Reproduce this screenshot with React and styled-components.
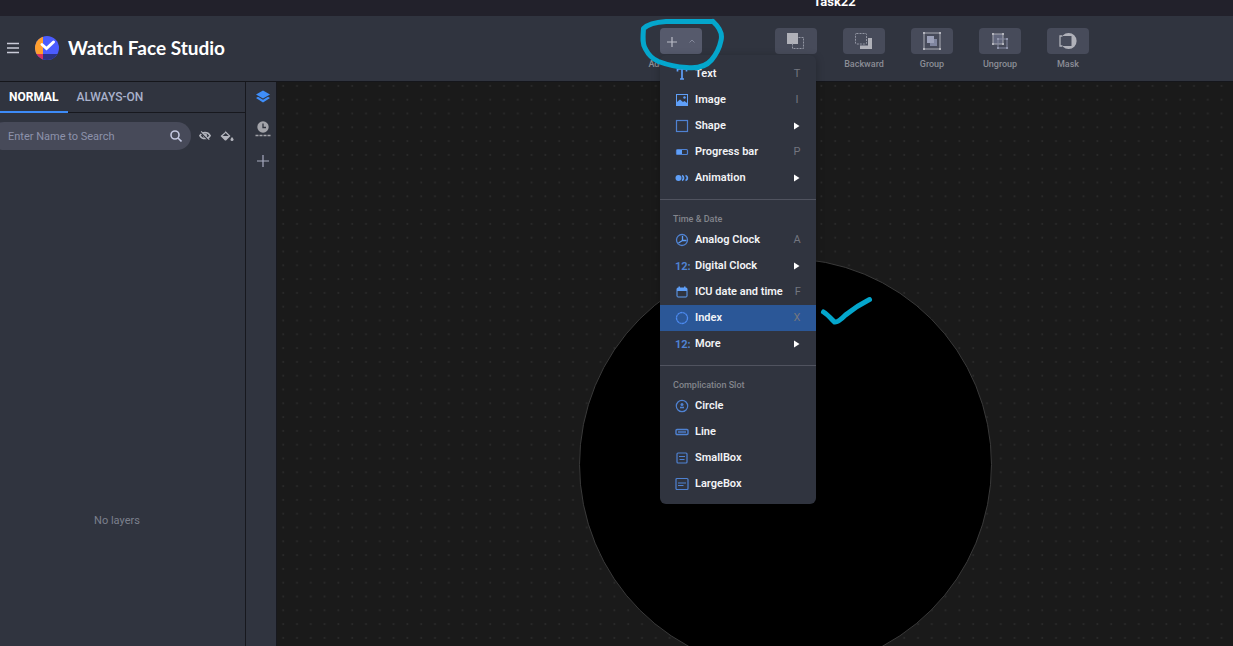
import React from "react";
import styled, { createGlobalStyle, css } from "styled-components";

const Global = createGlobalStyle`
  *, *::before, *::after { box-sizing: border-box; }
  body { margin: 0; background: #1a1a1a; font-family: Roboto, "Liberation Sans", sans-serif; }
  button, input { font: inherit; color: inherit; }
  button { border: 0; padding: 0; background: none; cursor: pointer; }
  svg { display: block; }
`;

const Page = styled.div`
  display: flex;
  flex-direction: column;
  height: 100vh;
  overflow: hidden;
`;

const TitleBar = styled.div`
  display: flex;
  flex: none;
  align-items: flex-end;
  justify-content: center;
  height: 16px;
  padding: 0 0 6px 436px;
  overflow: hidden;
  background: #22212b;
  color: #fff;
  font-size: 13px;
  font-weight: 700;
  line-height: 16px;
`;

const Header = styled.header`
  position: relative;
  z-index: 2;
  display: flex;
  flex: none;
  justify-content: space-between;
  height: 66px;
  padding: 0 131px 0 6px;
  background: #30343f;
  border-bottom: 1px solid #15161b;
`;

const Brand = styled.div`
  display: flex;
  align-items: center;
  padding-bottom: 2px;
`;

const MenuButton = styled.button`
  margin-right: 15px;
`;

const BrandName = styled.h1`
  margin: 0 0 0 9px;
  color: #fff;
  font-family: Lato, sans-serif;
  font-size: 19px;
  font-weight: 700;
  line-height: 24px;
`;

const Tools = styled.div`
  display: flex;
  padding-top: 12px;
`;

const Tool = styled.div`
  position: relative;
  z-index: ${(p) => (p.$spaced ? 1 : 0)};
  display: flex;
  flex-direction: column;
  align-items: center;
  gap: 4px;
  width: 68px;
  margin-right: ${(p) => (p.$spaced ? "47px" : "0")};
  color: #8b8d96;
  font-size: 9px;
  font-weight: 500;
  line-height: 12px;
  white-space: nowrap;
`;

const ToolButton = styled.button`
  display: flex;
  align-items: center;
  justify-content: center;
  gap: 10px;
  width: 42px;
  height: 26px;
  border-radius: 4px;
  background: ${(p) => (p.$open ? "#565a6c" : "#474b5a")};
  color: #a9abb3;
`;

const Menu = styled.div`
  position: absolute;
  top: 27px;
  left: 13px;
  width: 156px;
  padding: 6px 0 7px;
  border-radius: 6px;
  background: #30343f;
  box-shadow: 0 2px 8px rgba(0, 0, 0, 0.25);
`;

const MenuHeading = styled.div`
  margin-top: 8px;
  padding: 13px 13px 2px;
  border-top: 1px solid #50535f;
  color: #83858c;
  font-size: 9px;
  line-height: 12px;
`;

const MenuItem = styled.button`
  position: relative;
  display: grid;
  grid-template-columns: 16px 1fr 20px;
  column-gap: 5px;
  align-items: center;
  width: 100%;
  height: 26px;
  padding: 0 9px 0 14px;
  background: ${(p) => (p.$active ? "#2b5797" : "transparent")};
  color: #f2f3f6;
  font-size: 11px;
  font-weight: 600;
  line-height: 16px;
  text-align: left;
`;

const Hint = styled.span`
  display: flex;
  justify-content: center;
  color: #73767f;
  font-size: 11px;
  font-weight: 400;
`;

const overlay = css`
  position: absolute;
  pointer-events: none;
  fill: none;
  stroke: #04a6cc;
  stroke-width: 5;
  stroke-linecap: round;
  stroke-linejoin: round;
`;

const Scribble = styled.svg`
  ${overlay}
  top: -12px;
  left: -11px;
`;

const Tick = styled.svg`
  ${overlay}
  top: -10px;
  left: 158px;
`;

const Main = styled.main`
  display: flex;
  flex: 1;
  min-height: 0;
`;

const Layers = styled.section`
  flex: none;
  width: 246px;
  background: #30343f;
  border-right: 1px solid #17181e;
`;

const Tabs = styled.div`
  display: flex;
  height: 31px;
  border-bottom: 1px solid #17181e;
`;

const Tab = styled.button`
  height: 31px;
  padding: 0 9px;
  border-bottom: 2px solid ${(p) => (p.$active ? "#3d8bf7" : "transparent")};
  color: ${(p) => (p.$active ? "#fff" : "#a9b1cb")};
  font-size: 12px;
  font-weight: ${(p) => (p.$active ? 700 : 500)};
`;

const Filter = styled.div`
  display: flex;
  align-items: center;
  gap: 8px;
  padding-top: 9px;
`;

const SearchBox = styled.label`
  display: flex;
  align-items: center;
  width: 201px;
  height: 28px;
  margin-left: -10px;
  padding: 0 9px 0 18px;
  border-radius: 14px;
  background: #474a59;
  color: #c3c8e0;
`;

const SearchInput = styled.input`
  flex: 1;
  min-width: 0;
  padding: 0;
  border: 0;
  outline: 0;
  background: none;
  font-size: 11px;
  &::placeholder { color: #8d92ab; opacity: 1; }
`;

const IconButton = styled.button`
  color: #b3b5bd;
`;

const Empty = styled.p`
  margin: 0;
  padding: 363px 11px 0 0;
  color: #7c808d;
  font-size: 11px;
  line-height: 16px;
  text-align: center;
`;

const Rail = styled.nav`
  display: flex;
  flex: none;
  flex-direction: column;
  align-items: center;
  gap: 16px;
  width: 31px;
  padding: 7px 0 0 4px;
  background: #30343f;
  border-right: 1px solid #17181e;
`;

const Canvas = styled.section`
  position: relative;
  flex: 1;
  overflow: hidden;
  background: #1a1a1a;
`;

const Dial = styled.div`
  position: absolute;
  top: 176px;
  left: calc(50% - 176px);
  width: 413px;
  height: 413px;
  border: 1px solid #3a3a3a;
  border-radius: 50%;
  background: #000;
`;

const B = "#5f9ff8";
const D = "#4f82d2";

const menuIcons = {
  text: <path d="M3.500 5.500v-2.500h9v2.500M8 3v10M6 13h4" fill="none" stroke={B} strokeWidth="1.700" />,
  image: (
    <>
      <rect x="2.500" y="2.500" width="11" height="11" fill="none" stroke={B} />
      <path d="M3 13v-3l3-2.500 3 2.500 1.500-1 2.500 2v2z" fill={B} />
      <circle cx="10.500" cy="5.500" r="1.200" fill={B} />
    </>
  ),
  shape: <rect x="2.500" y="2.500" width="11" height="11" fill="none" stroke={D} strokeWidth="1.200" />,
  progress: (
    <>
      <rect x="2.500" y="5.500" width="11" height="5" rx="1" fill="none" stroke={D} strokeWidth="1.200" />
      <path d="M3 6h5v4H3z" fill={B} />
    </>
  ),
  animation: (
    <>
      <circle cx="4.500" cy="8" r="3" fill={B} />
      <path d="M8 5.500c2 .8 2 4.200 0 5M11.500 5.500c2.500.8 2.500 4.200 0 5" fill="none" stroke={B} strokeWidth="1.800" />
    </>
  ),
  analog: (
    <g fill="none" stroke={D} strokeWidth="1.300">
      <circle cx="8" cy="8" r="5.500" />
      <path d="M8.500 4v4.500h4M8.500 8.500 4.500 11" stroke={B} />
    </g>
  ),
  digital: (
    <text x="1" y="12" fill={D} fontSize="11" fontWeight="700" fontFamily="Roboto, sans-serif">12:</text>
  ),
  calendar: (
    <>
      <rect x="3" y="4" width="10" height="9" rx="1" fill="none" stroke={B} />
      <path d="M3 4h10v3H3zM4.500 2.500h1.500V5H4.500zM10 2.500h1.500V5H10z" fill={B} />
    </>
  ),
  index: <circle cx="8" cy="8" r="5.500" fill="none" stroke="#4c8af0" strokeWidth="1.300" strokeDasharray="2.600 .3" />,
  circle: (
    <>
      <circle cx="8" cy="8" r="5.700" fill="none" stroke={D} strokeWidth="1.200" />
      <circle cx="8" cy="6.500" r="1.500" fill={D} />
      <path d="M6 9.500h4" stroke={D} strokeWidth="1.600" />
    </>
  ),
  line: (
    <g fill="none" stroke={D}>
      <rect x="2" y="5.500" width="12" height="5" rx="1" strokeWidth="1.400" />
      <path d="M4 8h8" strokeWidth="1.400" />
    </g>
  ),
  small: (
    <g fill="none" stroke={D}>
      <rect x="3" y="3" width="10" height="10" rx="1" strokeWidth="1.200" />
      <path d="M5 6.500h6M5.500 9.500h5" />
    </g>
  ),
  large: (
    <g fill="none" stroke={D}>
      <rect x="2" y="2.500" width="12" height="11" rx="1" strokeWidth="1.200" />
      <path d="M4 7h8M4 9.500h5.500" />
    </g>
  ),
};

const sections = [
  {
    items: [
      ["Text", "text", "T"],
      ["Image", "image", "I"],
      ["Shape", "shape", ">"],
      ["Progress bar", "progress", "P"],
      ["Animation", "animation", ">"],
    ],
  },
  {
    title: "Time & Date",
    items: [
      ["Analog Clock", "analog", "A"],
      ["Digital Clock", "digital", ">"],
      ["ICU date and time", "calendar", "F"],
      ["Index", "index", "X"],
      ["More", "digital", ">"],
    ],
  },
  {
    title: "Complication Slot",
    items: [
      ["Circle", "circle"],
      ["Line", "line"],
      ["SmallBox", "small"],
      ["LargeBox", "large"],
    ],
  },
];

const toolIcons = {
  Forward: (
    <>
      <path d="M1 2h11v11H1z" fill="#b0b1b9" />
      <path d="M12.500 6.500h5v11h-11v-5" fill="none" stroke="#9396a3" strokeDasharray="2 1" />
    </>
  ),
  Backward: (
    <>
      <rect x="1.500" y="2.500" width="11" height="10.500" rx="1" fill="none" stroke="#9396a3" strokeDasharray="2 1" />
      <path d="M14 7h4v11H6v-3.500h8z" fill="#b0b1b9" />
    </>
  ),
  Group: (
    <>
      <path d="M2 2h16v16H2z" fill="none" stroke="#a9abb3" />
      <path d="M1 1h2v2H1zM17 1h2v2h-2zM1 17h2v2H1zM17 17h2v2h-2z" fill="#b4b5bd" />
      <path d="M8 8h7v7H8z" fill="#7f859f" />
      <path d="M5 5h7v7H5z" fill="#9ba0b8" />
    </>
  ),
  Ungroup: (
    <>
      <path d="M3 3h10v10H3z" fill="#62677d" stroke="#a9abb3" />
      <path d="M8 8h9v9H8z" fill="none" stroke="#8489a0" />
      <path d="M2 2h2v2H2zM12 2h2v2h-2zM2 12h2v2H2zM12 12h2v2h-2z" fill="#b4b5bd" />
      <path d="M7 7h2v2H7zM16 7h2v2h-2zM7 16h2v2H7zM16 16h2v2h-2z" fill="#8f94aa" />
    </>
  ),
  Mask: (
    <>
      <path fillRule="evenodd" d="M5 4.300A8 8 0 1 1 5 15.700zM5 5v10h8.500V5z" fill="#b0b1b9" />
      <path d="M4.500 5H2v10h2.500" fill="none" stroke="#b0b1b9" strokeWidth="1.300" />
    </>
  ),
};

function MenuRow({ label, icon, hint }) {
  const active = label === "Index";
  return (
    <MenuItem type="button" role="menuitem" $active={active}>
      <svg width="16" height="16" viewBox="0 0 16 16" aria-hidden="true">{menuIcons[icon]}</svg>
      <span>{label}</span>
      {hint === ">" ? (
        <Hint>
          <svg width="6" height="8" viewBox="0 0 6 8" aria-hidden="true"><path d="M0 .5v7L5.500 4z" fill="#fff" /></svg>
        </Hint>
      ) : (
        <Hint>{hint}</Hint>
      )}
      {active && (
        <Tick width="60" height="36" viewBox="0 0 60 36" aria-hidden="true">
          <path d="M5.500 17c4 2.500 8 7 11 10 3 .8 7-3 11-7 8-6.500 15-11 24-15.500" />
        </Tick>
      )}
    </MenuItem>
  );
}

export default function App() {
  return (
    <>
      <Global />
      <Page>
        <TitleBar>Task22</TitleBar>
        <Header>
          <Brand>
            <MenuButton type="button" aria-label="Main menu">
              <svg width="14" height="12" viewBox="0 0 14 12" stroke="#c9cbd8" strokeWidth="1.300">
                <path d="M1 1.500h12M1 6h12M1 10.500h12" />
              </svg>
            </MenuButton>
            <svg width="24" height="24" viewBox="0 0 24 24" aria-hidden="true">
              <clipPath id="logo"><circle cx="12" cy="12" r="12" /></clipPath>
              <g clipPath="url(#logo)">
                <path d="M0 0h24v24H0z" fill="#4b5cff" />
                <path d="M0 0h8v18H0z" fill="#ff9f2e" />
                <path d="M0 18h8v6H0z" fill="#d5305f" />
                <path d="M8 18h16v6H8z" fill="#2b3384" />
              </g>
              <path d="M7 8.500 11.500 12.500 18.500 6" fill="none" stroke="#fff" strokeWidth="3" strokeLinecap="round" />
            </svg>
            <BrandName>Watch Face Studio</BrandName>
          </Brand>
          <Tools>
            <Tool $spaced>
              <ToolButton type="button" $open aria-label="Add component" aria-expanded="true">
                <svg width="12" height="12" viewBox="0 0 12 12" fill="none" stroke="#b9bbc6" strokeWidth="1.200">
                  <path d="M6 2v10M1 7h10" />
                </svg>
                <svg width="8" height="6" viewBox="0 0 8 6" fill="none" stroke="#84889a"><path d="M1.500 4.500 4 2l2.500 2.500" /></svg>
              </ToolButton>
              <span>Add Component</span>
              <Menu role="menu">
                {sections.map((s, i) => (
                  <React.Fragment key={i}>
                    {s.title && <MenuHeading>{s.title}</MenuHeading>}
                    {s.items.map(([label, icon, hint]) => (
                      <MenuRow key={label} label={label} icon={icon} hint={hint} />
                    ))}
                  </React.Fragment>
                ))}
              </Menu>
              <Scribble width="92" height="56" viewBox="0 0 92 56" aria-hidden="true">
                <path d="M77 5.500H30C22 6 12 8 7.500 12.500 7 20 6 28 9.500 33c3 6 7 10 13 12.500 8 3 18 5.500 28 6 9 1 19-.5 25-7.500 5-6 8-12 9.500-19.500C87 17 83 11 77 5.500" />
              </Scribble>
            </Tool>
            {Object.keys(toolIcons).map((name) => (
              <Tool key={name}>
                <ToolButton type="button" aria-label={name}>
                  <svg width="20" height="20" viewBox="0 0 20 20" aria-hidden="true">{toolIcons[name]}</svg>
                </ToolButton>
                <span>{name}</span>
              </Tool>
            ))}
          </Tools>
        </Header>
        <Main>
          <Layers>
            <Tabs>
              <Tab type="button" $active>NORMAL</Tab>
              <Tab type="button">ALWAYS-ON</Tab>
            </Tabs>
            <Filter>
              <SearchBox>
                <SearchInput type="text" placeholder="Enter Name to Search" aria-label="Enter Name to Search" />
                <svg width="12" height="12" viewBox="0 0 12 12" fill="none" stroke="currentColor" strokeWidth="1.600">
                  <circle cx="5" cy="5" r="4" /><path d="m8 8 3.500 3.500" />
                </svg>
              </SearchBox>
              <IconButton type="button" aria-label="Hide layers">
                <svg width="12" height="12" viewBox="0 0 14 14" fill="none" stroke="currentColor">
                  <path d="M1 6.500C3 3.500 5 3 7 3s4.500.8 6 3.500C11.500 9.500 9 10 7 10S2.500 9.500 1 6.500z" strokeWidth="1.800" />
                  <circle cx="7" cy="6.500" r="2" fill="currentColor" />
                  <path d="m2 3 9 9" stroke="#30343f" strokeWidth="1.500" />
                  <path d="m2.500 1.500 9.500 9.700" strokeWidth="1.300" />
                </svg>
              </IconButton>
              <IconButton type="button" aria-label="Fill colour">
                <svg width="16" height="12" viewBox="0 0 16 12">
                  <path d="m6 .5 5.500 5.500-4.500 4.500H6L1.500 6 6.500 1.800zM6.700 3 3.700 6h6z" fill="currentColor" fillRule="evenodd" />
                  <path d="M13 7s1.500 1.700 1.500 2.600a1.500 1.500 0 0 1-3 0C11.500 8.700 13 7 13 7z" fill="currentColor" />
                </svg>
              </IconButton>
            </Filter>
            <Empty>No layers</Empty>
          </Layers>
          <Rail>
            <IconButton type="button" aria-label="Layers">
              <svg width="16" height="16" viewBox="0 0 16 16" fill="#3f8efa">
                <path d="m8 1.500 7 4-7 4-7-4z" />
                <path d="m1 9 2-1.200 5 2.900 5-2.900L15 9l-7 4.500z" />
              </svg>
            </IconButton>
            <IconButton type="button" aria-label="Timeline">
              <svg width="16" height="16" viewBox="0 0 16 16">
                <circle cx="8" cy="6" r="5.700" fill="#a3a4aa" />
                <path d="M8 2.500v4h3" fill="none" stroke="#30343f" strokeWidth="1.300" />
                <path d="M.5 14.500h15" stroke="#a3a4aa" strokeWidth="1.500" strokeDasharray="3 1" />
              </svg>
            </IconButton>
            <IconButton type="button" aria-label="Add panel">
              <svg width="16" height="16" viewBox="0 0 16 16"><path d="M8 2v12M2 8h12" stroke="#a7abc0" strokeWidth="1.200" /></svg>
            </IconButton>
          </Rail>
          <Canvas aria-label="Watch face canvas">
            <svg width="100%" height="100%" aria-hidden="true">
              <pattern id="dots" width="13.800" height="13.800" patternUnits="userSpaceOnUse" x="-1" y="-3">
                <circle cx="7.200" cy="7" r="1" fill="#2b2b2b" />
              </pattern>
              <rect width="100%" height="100%" fill="url(#dots)" />
            </svg>
            <Dial />
          </Canvas>
        </Main>
      </Page>
    </>
  );
}
